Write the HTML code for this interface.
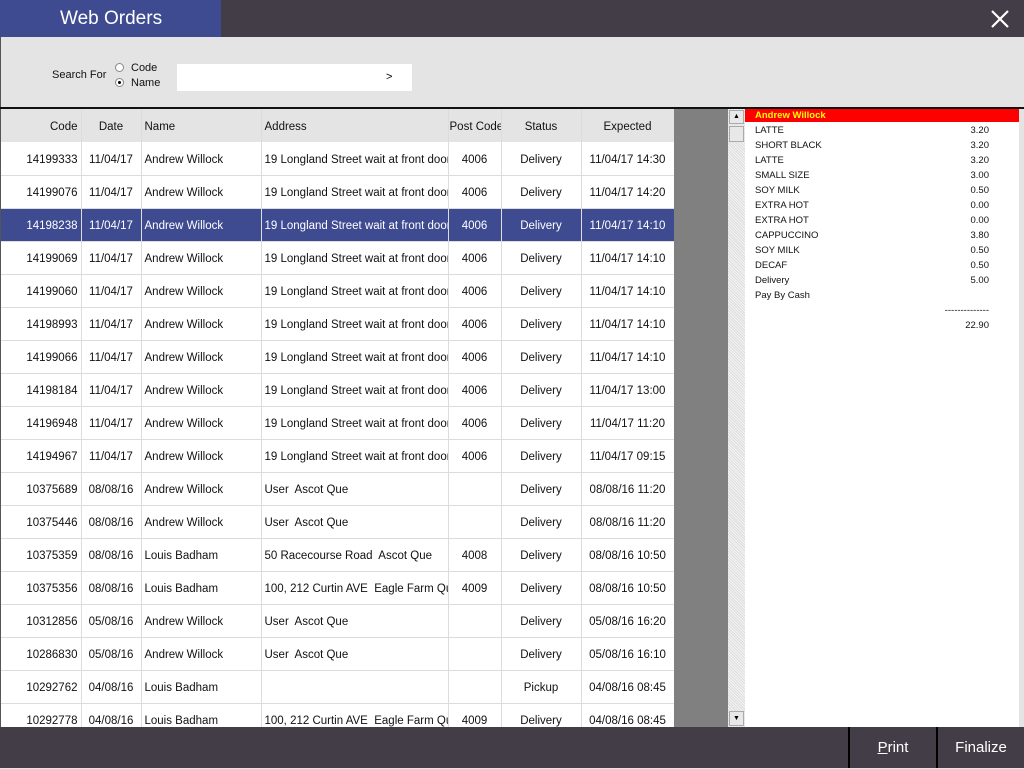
<!DOCTYPE html>
<html><head><meta charset="utf-8"><style>
*{margin:0;padding:0;box-sizing:border-box}
body{width:1024px;height:768px;overflow:hidden;background:#e4e4e4;font-family:"Liberation Sans",sans-serif;position:relative}
.abs{position:absolute}
#top{left:0;top:0;width:1024px;height:37px;background:#433d47}
#title{left:0;top:0;width:221px;height:37px;background:#3f4b91;color:#fff;font-size:19px;padding:8px 0 0 60px}
#grid{left:1px;top:109px;width:673px;height:618px;background:#fff;overflow:hidden}
table{border-collapse:collapse;font-size:11.5px;table-layout:fixed;width:673px;color:#111}
td,th{height:33px;border-right:1px solid #dcdcdc;border-bottom:1px solid #dcdcdc;white-space:nowrap;overflow:hidden;text-overflow:clip;padding:3px 3px 0;font-weight:normal}
th{background:#e4e4e4;height:33px;border-bottom:none}
tr.sel td{background:#3f4b91;color:#fff}
.r{text-align:right}.c{text-align:center}.l{text-align:left}
#rc{left:745px;top:109px;width:274px;height:618px;background:#fff;font-size:9.5px;color:#111}
.ln{position:absolute;left:10px;width:234px;height:15px}
.ln span{position:absolute;right:0}
#bot{left:0;top:727px;width:1024px;height:41px;background:#433d47}
.btn{top:727px;height:41px;color:#fff;font-size:15px;text-align:center;line-height:42px;border-left:2px solid #000}
</style></head><body>
<div class="abs" id="top"></div>
<div class="abs" id="title">Web Orders</div>
<svg class="abs" style="left:990px;top:9px" width="20" height="20"><path d="M2 2L18 18M18 2L2 18" stroke="#fff" stroke-width="2.2"/></svg>
<div class="abs" style="left:0;top:37px;width:1px;height:731px;background:#555"></div>
<div class="abs" style="left:52px;top:69px;font-size:11px;color:#111">Search For</div>
<div class="abs" style="left:115px;top:63px;width:9px;height:9px;border:1px solid #888;border-radius:50%;background:#fff"></div>
<div class="abs" style="left:131px;top:62px;font-size:11px;color:#111">Code</div>
<div class="abs" style="left:115px;top:78px;width:9px;height:9px;border:1px solid #888;border-radius:50%;background:#fff"><div style="margin:2px;width:3px;height:3px;background:#000;border-radius:50%"></div></div>
<div class="abs" style="left:131px;top:77px;font-size:11px;color:#111">Name</div>
<div class="abs" style="left:177px;top:64px;width:235px;height:27px;background:#fff;font-size:11px;padding:7px 0 0 209px">&gt;</div>
<div class="abs" style="left:0;top:107px;width:1024px;height:2px;background:#111"></div>
<div class="abs" style="left:674px;top:109px;width:54px;height:618px;background:#808080"></div>
<div class="abs" style="left:728px;top:109px;width:17px;height:618px;background:#eee;background-image:repeating-linear-gradient(45deg,#ddd 0 1px,#f4f4f4 1px 2px)"></div>
<div class="abs" style="left:729px;top:110px;width:15px;height:14px;background:#e8e8e8;border:1px solid #aaa;font-size:7px;text-align:center;line-height:12px">▲</div>
<div class="abs" style="left:729px;top:126px;width:15px;height:16px;background:#e8e8e8;border:1px solid #aaa"></div>
<div class="abs" style="left:729px;top:711px;width:15px;height:15px;background:#e8e8e8;border:1px solid #aaa;font-size:7px;text-align:center;line-height:13px">▼</div>
<div class="abs" id="grid"><table>
<colgroup><col style="width:80px"><col style="width:60px"><col style="width:120px"><col style="width:187px"><col style="width:53px"><col style="width:80px"><col style="width:93px"></colgroup>
<tr><th class="r">Code</th><th class="c">Date</th><th class="l">Name</th><th class="l">Address</th><th class="l" style="padding:3px 0 0 1px">Post Code</th><th class="c">Status</th><th class="c">Expected</th></tr>
<tr><td class="r">14199333</td><td class="c">11/04/17</td><td>Andrew Willock</td><td>19 Longland Street wait at front door</td><td class="c">4006</td><td class="c">Delivery</td><td class="c">11/04/17 14:30</td></tr>
<tr><td class="r">14199076</td><td class="c">11/04/17</td><td>Andrew Willock</td><td>19 Longland Street wait at front door</td><td class="c">4006</td><td class="c">Delivery</td><td class="c">11/04/17 14:20</td></tr>
<tr class="sel"><td class="r">14198238</td><td class="c">11/04/17</td><td>Andrew Willock</td><td>19 Longland Street wait at front door</td><td class="c">4006</td><td class="c">Delivery</td><td class="c">11/04/17 14:10</td></tr>
<tr><td class="r">14199069</td><td class="c">11/04/17</td><td>Andrew Willock</td><td>19 Longland Street wait at front door</td><td class="c">4006</td><td class="c">Delivery</td><td class="c">11/04/17 14:10</td></tr>
<tr><td class="r">14199060</td><td class="c">11/04/17</td><td>Andrew Willock</td><td>19 Longland Street wait at front door</td><td class="c">4006</td><td class="c">Delivery</td><td class="c">11/04/17 14:10</td></tr>
<tr><td class="r">14198993</td><td class="c">11/04/17</td><td>Andrew Willock</td><td>19 Longland Street wait at front door</td><td class="c">4006</td><td class="c">Delivery</td><td class="c">11/04/17 14:10</td></tr>
<tr><td class="r">14199066</td><td class="c">11/04/17</td><td>Andrew Willock</td><td>19 Longland Street wait at front door</td><td class="c">4006</td><td class="c">Delivery</td><td class="c">11/04/17 14:10</td></tr>
<tr><td class="r">14198184</td><td class="c">11/04/17</td><td>Andrew Willock</td><td>19 Longland Street wait at front door</td><td class="c">4006</td><td class="c">Delivery</td><td class="c">11/04/17 13:00</td></tr>
<tr><td class="r">14196948</td><td class="c">11/04/17</td><td>Andrew Willock</td><td>19 Longland Street wait at front door</td><td class="c">4006</td><td class="c">Delivery</td><td class="c">11/04/17 11:20</td></tr>
<tr><td class="r">14194967</td><td class="c">11/04/17</td><td>Andrew Willock</td><td>19 Longland Street wait at front door</td><td class="c">4006</td><td class="c">Delivery</td><td class="c">11/04/17 09:15</td></tr>
<tr><td class="r">10375689</td><td class="c">08/08/16</td><td>Andrew Willock</td><td>User&nbsp; Ascot Que</td><td class="c"></td><td class="c">Delivery</td><td class="c">08/08/16 11:20</td></tr>
<tr><td class="r">10375446</td><td class="c">08/08/16</td><td>Andrew Willock</td><td>User&nbsp; Ascot Que</td><td class="c"></td><td class="c">Delivery</td><td class="c">08/08/16 11:20</td></tr>
<tr><td class="r">10375359</td><td class="c">08/08/16</td><td>Louis Badham</td><td>50 Racecourse Road&nbsp; Ascot Que</td><td class="c">4008</td><td class="c">Delivery</td><td class="c">08/08/16 10:50</td></tr>
<tr><td class="r">10375356</td><td class="c">08/08/16</td><td>Louis Badham</td><td>100, 212 Curtin AVE&nbsp; Eagle Farm Que</td><td class="c">4009</td><td class="c">Delivery</td><td class="c">08/08/16 10:50</td></tr>
<tr><td class="r">10312856</td><td class="c">05/08/16</td><td>Andrew Willock</td><td>User&nbsp; Ascot Que</td><td class="c"></td><td class="c">Delivery</td><td class="c">05/08/16 16:20</td></tr>
<tr><td class="r">10286830</td><td class="c">05/08/16</td><td>Andrew Willock</td><td>User&nbsp; Ascot Que</td><td class="c"></td><td class="c">Delivery</td><td class="c">05/08/16 16:10</td></tr>
<tr><td class="r">10292762</td><td class="c">04/08/16</td><td>Louis Badham</td><td></td><td class="c"></td><td class="c">Pickup</td><td class="c">04/08/16 08:45</td></tr>
<tr><td class="r">10292778</td><td class="c">04/08/16</td><td>Louis Badham</td><td>100, 212 Curtin AVE&nbsp; Eagle Farm Que</td><td class="c">4009</td><td class="c">Delivery</td><td class="c">04/08/16 08:45</td></tr>
</table></div>
<div class="abs" id="rc">
<div class="abs" style="left:0;top:0;width:274px;height:13px;background:#f00;color:#ff0;font-weight:bold;padding:1px 0 0 10px">Andrew Willock</div>
<div class="ln" style="top:16px">LATTE<span>3.20</span></div>
<div class="ln" style="top:31px">SHORT BLACK<span>3.20</span></div>
<div class="ln" style="top:46px">LATTE<span>3.20</span></div>
<div class="ln" style="top:61px">SMALL SIZE<span>3.00</span></div>
<div class="ln" style="top:76px">SOY MILK<span>0.50</span></div>
<div class="ln" style="top:91px">EXTRA HOT<span>0.00</span></div>
<div class="ln" style="top:106px">EXTRA HOT<span>0.00</span></div>
<div class="ln" style="top:121px">CAPPUCCINO<span>3.80</span></div>
<div class="ln" style="top:136px">SOY MILK<span>0.50</span></div>
<div class="ln" style="top:151px">DECAF<span>0.50</span></div>
<div class="ln" style="top:166px">Delivery<span>5.00</span></div>
<div class="ln" style="top:181px">Pay By Cash</div>
<div class="ln" style="top:196px"><span>--------------</span></div>
<div class="ln" style="top:211px"><span>22.90</span></div>
</div>
<div class="abs" id="bot"></div>
<div class="abs btn" style="left:848px;width:88px"><u>P</u>rint</div>
<div class="abs btn" style="left:936px;width:88px">Finalize</div>
</body></html>
